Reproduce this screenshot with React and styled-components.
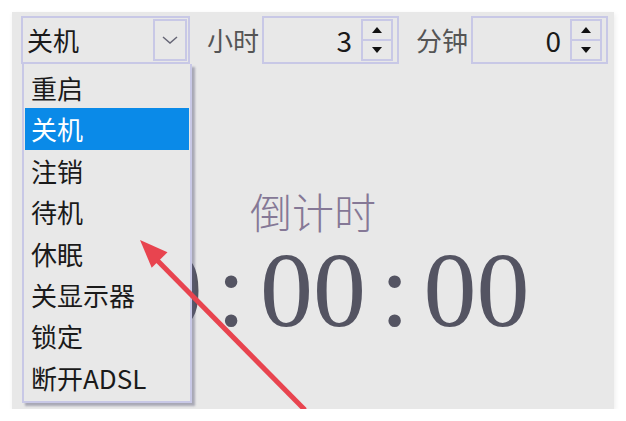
import styled, { createGlobalStyle } from "styled-components";

const GlobalStyle = createGlobalStyle`
  html, body {
    margin: 0;
    background: #ffffff;
  }
  body {
    font-family: "Noto Sans CJK SC", "Noto Sans", sans-serif;
  }
`;

const options = ["重启", "关机", "注销", "待机", "休眠", "关显示器", "锁定", "断开ADSL"];

export default function App() {
  const selected = "关机";

  return (
    <>
      <GlobalStyle />
      <Panel>
        <Toolbar>
          <Combo>
            <ComboText>{selected}</ComboText>
            <ComboButton>
              <svg width="18" height="12" viewBox="0 0 18 12">
                <polyline points="2,3 9,9 16,3" fill="none" stroke="#666676" strokeWidth="1.5" />
              </svg>
            </ComboButton>
          </Combo>
          <Label>小时</Label>
          <SpinBox value="3" />
          <Label>分钟</Label>
          <SpinBox value="0" />
        </Toolbar>

        <Countdown>
          <Title>倒计时</Title>
          <Clock>
            00<Colon>:</Colon>00<Colon>:</Colon>00
          </Clock>
        </Countdown>

        <DropList>
          {options.map((item) => (
            <Option key={item} $active={item === selected}>
              {item}
            </Option>
          ))}
        </DropList>

        <Arrow width="602" height="397" viewBox="0 0 602 397">
          <line x1="293" y1="398" x2="140" y2="243" stroke="#e8444f" strokeWidth="5" />
          <polygon points="128,228 139.7,255.7 155.5,240.3" fill="#e8444f" />
        </Arrow>
      </Panel>
    </>
  );
}

function SpinBox({ value }) {
  return (
    <Spin>
      <SpinValue>{value}</SpinValue>
      <SpinButtons>
        <SpinButton>
          <Triangle $up />
        </SpinButton>
        <SpinButton>
          <Triangle />
        </SpinButton>
      </SpinButtons>
    </Spin>
  );
}

const Panel = styled.div`
  position: relative;
  margin: 12px 0 0 12px;
  width: 602px;
  height: 397px;
  background: #e8e8e8;
  box-shadow: 1px 2px 5px rgba(0, 0, 0, 0.08);
  overflow: hidden;
`;

const Toolbar = styled.div`
  display: flex;
  align-items: center;
  padding: 4px 0 0 9px;
  height: 48px;
`;

const Combo = styled.div`
  box-sizing: border-box;
  display: flex;
  align-items: center;
  width: 169px;
  height: 48px;
  border: 2px solid #c8c8e6;
  padding-right: 1px;
`;

const ComboText = styled.div`
  flex: 1;
  padding-left: 4px;
  font-size: 26px;
  color: #1a1a1a;
  line-height: 44px;
`;

const ComboButton = styled.div`
  box-sizing: border-box;
  display: flex;
  align-items: center;
  justify-content: center;
  width: 34px;
  height: 42px;
  border: 2px solid #c8c8e6;
`;

const Label = styled.div`
  margin: 0 3px 0 17px;
  font-size: 26px;
  color: #555555;
  line-height: 44px;
`;

const Spin = styled.div`
  box-sizing: border-box;
  display: flex;
  align-items: center;
  width: 137px;
  height: 48px;
  border: 2px solid #c8c8e6;
  padding-right: 4px;
`;

const SpinValue = styled.div`
  flex: 1;
  text-align: right;
  padding-right: 9px;
  font-size: 28px;
  color: #1a1a1a;
  line-height: 44px;
`;

const SpinButtons = styled.div`
  box-sizing: border-box;
  display: flex;
  flex-direction: column;
  width: 32px;
  height: 42px;
  border: 2px solid #c8c8e6;
`;

const SpinButton = styled.div`
  flex: 1;
  display: flex;
  align-items: center;
  justify-content: center;
  & + & {
    border-top: 2px solid #c8c8e6;
  }
`;

const Triangle = styled.div`
  width: 0;
  height: 0;
  border-left: 5px solid transparent;
  border-right: 5px solid transparent;
  ${({ $up }) =>
    $up ? "border-bottom: 6px solid #111;" : "border-top: 6px solid #111;"}
`;

const Countdown = styled.div`
  display: flex;
  flex-direction: column;
  align-items: center;
  padding-top: 125px;
`;

const Title = styled.div`
  font-size: 42px;
  font-weight: 300;
  line-height: 44px;
  color: #857896;
`;

const Clock = styled.div`
  margin-top: 5px;
  font-family: "Liberation Serif", "Times New Roman", serif;
  font-size: 106px;
  line-height: 1;
  color: #545462;
  white-space: nowrap;
`;

const Colon = styled.span`
  margin: 0 14px;
`;

const DropList = styled.div`
  position: absolute;
  left: 10px;
  top: 52px;
  box-sizing: border-box;
  width: 170px;
  height: 339px;
  padding: 3px 1px 0;
  background: #e8e8e8;
  border: 2px solid #c8c8e6;
  border-top: none;
  box-shadow: 3px 3px 2px rgba(90, 90, 120, 0.45);
`;

const Option = styled.div`
  height: 41.4px;
  line-height: 41.4px;
  padding-left: 6px;
  font-size: 26px;
  color: ${({ $active }) => ($active ? "#ffffff" : "#1a1a1a")};
  background: ${({ $active }) => ($active ? "#0a8ae8" : "transparent")};
  white-space: nowrap;
`;

const Arrow = styled.svg`
  position: absolute;
  left: 0;
  top: 0;
  pointer-events: none;
`;
